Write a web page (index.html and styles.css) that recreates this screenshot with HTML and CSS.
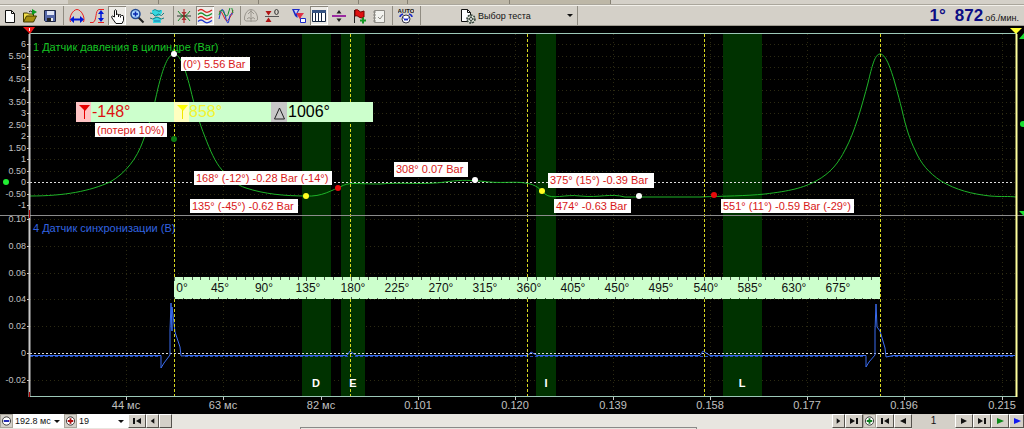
FILE: index.html
```html
<!DOCTYPE html>
<html lang="ru">
<head>
<meta charset="utf-8">
<title>Осциллограф</title>
<link rel="stylesheet" href="styles.css">
</head>
<body>
<div class="tabs"><span class="tab w1"></span><span class="tab w2"></span><span class="tab w2"></span><span class="tab w3"></span><span class="tab w4"></span><span class="tab w4"></span></div>
<header class="toolbar">
  <div class="group file">
    <button class="tool" aria-label="Новый"><svg viewBox="0 0 16 16"><path d="M3.500 2.500h6l3 3v9h-9z" fill="#fff" stroke="#111"/><path d="M9.500 2.500v3h3" fill="none" stroke="#111"/></svg></button>
    <button class="tool" aria-label="Открыть"><svg viewBox="0 0 16 16"><path d="M1.500 14V5h4l1 1h5v3" fill="#f4e04c" stroke="#443c00"/><path d="M1.500 14l3-6h10l-3 6z" fill="#a89010" stroke="#443c00"/><path d="M10 1l5 3-5 3z" fill="#0a9a20"/><path d="M7 4q1-2 3 0" fill="none" stroke="#222"/></svg></button>
    <button class="tool" aria-label="Сохранить"><svg viewBox="0 0 16 16"><path d="M2.500 2.500h11v11h-10l-1-1z" fill="#5668a8" stroke="#1c2340"/><path d="M5 3h7v4H5z" fill="#dfe4f4"/><path d="M5 10h6v3H5z" fill="#222"/><path d="M9 10h2v3H9z" fill="#eee"/></svg></button>
  </div>
  <div class="group view">
    <button class="tool" aria-label="Период"><svg viewBox="0 0 16 16"><path d="M1.500 14C-.5 9 4 1.500 8 1.500S16.500 9 14.500 14" fill="none" stroke="#e82020"/><path d="M4 11.500h8" stroke="#0018d8" stroke-width="2"/><path d="M5 8v7L1 11.500zM11 8v7l4-3.500z" fill="#0018d8"/></svg></button>
    <button class="tool" aria-label="Амплитуда"><svg viewBox="0 0 16 16"><path d="M1 14.500h3C8 13 6 2 10 1.500h5" fill="none" stroke="#e82020"/><path d="M9 14.500h6" stroke="#e82020"/><path d="M12 4v8" stroke="#0018d8" stroke-width="1.500"/><path d="M9 6l3-4 3 4zM9 10l3 4 3-4z" fill="#0018d8"/></svg></button>
    <button class="tool on" aria-label="Рука"><svg viewBox="0 0 16 16"><path d="M5.500 9V2.500q1-1.500 2 0V7l1-1 1.500 1 1.500-.5 1 1 1.500 0 .5 1v4l-1.500 3h-6L3 10q-1-2 .5-2z" fill="#fff" stroke="#111"/><path d="M9.500 7v2M11.500 7.500v2" stroke="#111"/></svg></button>
    <button class="tool" aria-label="Масштаб"><svg viewBox="0 0 16 16"><path d="M9.500 9.500l5 5" stroke="#222" stroke-width="2"/><circle cx="6.500" cy="6" r="4.500" fill="#a8d4ff" stroke="#234a92" stroke-width="1.500"/><path d="M4 6h5M6.500 3.500v5" stroke="#0828b0" stroke-width="1.500"/></svg></button>
    <button class="tool" aria-label="Осциллограмма"><svg viewBox="0 0 16 16"><path d="M3 2h10v3l-3 3H6L3 5zM6 9h4l2 2v4H4v-4z" fill="#35d8e0"/><path d="M1 5q3 0 4 2t3 0 3 0 4-2M1 10q3 2 5 0t4 0 5 0" fill="none" stroke="#177c82"/><path d="M4 2.500q2-2 4 0t4 0" fill="none" stroke="#258a96"/><path d="M5 13h6" stroke="#1a6fb0"/></svg></button>
  </div>
  <div class="group mode">
    <button class="tool" aria-label="Ноль"><svg viewBox="0 0 16 16"><path d="M2 3q3 5 6 5t6 5M2 13q3-5 6-5t6-5" fill="none" stroke="#19882c"/><path d="M1 8h14" stroke="#333"/><path d="M8 1v14" stroke="#a11"/><path d="M5.500 4h5L8 7.500zM5.500 12h5L8 8.500z" fill="#a33"/></svg></button>
    <button class="tool on" aria-label="Раздельно"><svg viewBox="0 0 16 16"><g fill="none" stroke-width="1.200"><path d="M1 3q3-3 6 0t8-1" stroke="#d82020"/><path d="M1 6.500q3-3 6 0t8-1" stroke="#149030"/><path d="M1 10q3-3 6 0t8-1" stroke="#d82020"/><path d="M1 13.500q3-3 6 0t8-1" stroke="#2038d0"/></g></svg></button>
    <button class="tool" aria-label="Вместе"><svg viewBox="0 0 16 16"><g fill="none"><path d="M1 3q3 0 5 6t5 2 4-9" stroke="#d82020"/><path d="M1 11Q4-6 7 7t4 5 4-6" stroke="#2038d0"/><path d="M1 7q2-9 5-2t5-2 4 2" stroke="#149030"/></g></svg></button>
  </div>
  <div class="group level">
    <button class="tool" aria-label="Авто"><svg viewBox="0 0 16 16"><path d="M3 13Q1 13 1.500 9 3 2 8 1.500q5 .5 6.500 7.500.5 4-1.500 4z" fill="none" stroke="#9a968e"/><path d="M8 2v12M4 11q2-3 4 0 2-3 4 0M5 6l3-3 3 3" fill="none" stroke="#9a968e"/></svg></button>
    <button class="tool" aria-label="Обнуление"><svg viewBox="0 0 16 16"><path d="M1 8.500h14" stroke="#555"/><path d="M1.500 3h6l-3 4.500zM1.500 14h6l-3-4.500z" fill="#b01414"/><ellipse cx="12.500" cy="4" rx="1.800" ry="2.500" fill="none" stroke="#333"/></svg></button>
  </div>
  <div class="group data">
    <button class="tool" aria-label="Фильтр"><svg viewBox="0 0 16 16"><path d="M1 1h8L6.500 5v5L4 8z" fill="#1a28c8"/><path d="M3 2l2 4 2-4z" fill="#c8d0f4"/><path d="M5 5h8l-3 4v4L7.500 9z" fill="#e03048"/><path d="M9.500 10.500h5v4h-5z" fill="#fff" stroke="#1a28c8"/></svg></button>
    <button class="tool on" aria-label="Таблица"><svg viewBox="0 0 16 16"><path d="M1.500 2.500h13v11h-13z" fill="#fff" stroke="#15253f"/><path d="M1 2h14v3H1z" fill="#34517f"/><path d="M4.500 5v9M7.500 5v9M10.500 5v9" stroke="#15253f"/></svg></button>
    <button class="tool" aria-label="Разделить"><svg viewBox="0 0 16 16"><path d="M1 8h14" stroke="#9a2aa0" stroke-width="2"/><path d="M5.500 5.500h5L8 2zM5.500 10.500h5L8 14z" fill="#222"/></svg></button>
    <button class="tool" aria-label="Метка"><svg viewBox="0 0 16 16"><path d="M3.500 2v13" stroke="#222"/><path d="M4 2q3-1 4 1t5 0v6q-3 2-5 0T4 8z" fill="#e01010" stroke="#700"/><path d="M9 12.500h6M12 9.500v6" stroke="#119922" stroke-width="2"/></svg></button>
    <button class="tool" aria-label="Отчёт"><svg viewBox="0 0 16 16"><path d="M3.500 2.500h10v12h-10z" fill="#f2f2ee" stroke="#8c8a84"/><path d="M2 4h3M2 7h3M2 10h3M2 13h3M7 9l2 2 3-4" fill="none" stroke="#8c8a84"/></svg></button>
  </div>
  <div class="group run">
    <button class="tool" aria-label="Автозапуск"><svg viewBox="0 0 16 16"><text x="8" y="5" class="auto">AUTO</text><circle cx="8" cy="11" r="4" fill="#fff" stroke="#334"/><path d="M5.500 9.500l1.500 3 1-2 1 2 1.500-3" fill="none" stroke="#1a28c8"/><path d="M2 9q0-2 3-3M14 9q0-2-3-3" fill="none" stroke="#1a28c8" stroke-width="1.500"/></svg></button>
  </div>
  <button class="test"><svg class="testicon" viewBox="0 0 16 16"><path d="M1.500 1.500h6l3 3v9h-9z" fill="#fff" stroke="#111"/><path d="M7.500 1.500v3h3" fill="none" stroke="#111"/><circle cx="11" cy="11" r="4" fill="#e4e8dc" stroke="#34423a" stroke-width="1.500" stroke-dasharray="2 1"/><path d="M7 11h8M11 7v8" stroke="#34423a"/><circle cx="11" cy="11" r="1.500" fill="#fff" stroke="#34423a"/></svg><span>Выбор теста</span><i class="caret"></i></button>
  <output class="rpm"><b>1°</b><b>872</b><small>об./мин.</small></output>
</header>
<main class="scope">
  <svg class="plot" id="plot" viewBox="0 26 1024 388" role="img" aria-label="Осциллограмма">
    <g id="grid"></g>
    <g class="phase"><path d="M302 34h29v362h-29zM341 34h24v362h-24zM536 34h20v362h-20zM723 34h39v362h-39z"/></g>
    <path class="zero" d="M30 182.500H1014M30 353.500H1014"/>
    <text class="channel green" x="33" y="51">1 Датчик давления в цилиндре (Bar)</text>
    <text class="channel blue" x="33" y="232">4 Датчик синхронизации (В)</text>
    <path class="wave pressure" d="M30 196C65 196 90 191 110 182C126 173 137 158 143 141C150 123 154 106 158 88C163 68 168 54 174 54C180 54 185 68 190 87C195 108 199 122 205 137C210 150 215 162 222 170C230 178 236 185 246 188C264 194 285 196 306 196C322 197 332 190 342 186C350 182 356 184 380 184C400 182 425 185 445 182C460 180 465 180 480 181C500 184 515 181 525 183C536 184 541 190 545 194C552 200 565 194 580 196C600 198 610 193 625 197L700 197C725 196 745 196 765 194C790 191 803 188 816 181C831 173 839 162 845 150C855 132 862 105 868 83C872 66 875 54 880 54C887 54 893 74 902 110C906 128 910 140 915 150C921 164 929 173 941 181C956 190 972 194 990 196C1002 197 1008 196 1016 197"/>
    <path class="wave sync" d="M30 355.500H161V368L164 363 170 355V330L171 303 172 331 172 307 175 332 180 347 181 356 187 355.500H347L350 351 356 355.500H528L531 352 537 355.500H700L703 351 710 355.500H866V367L869 362 875 355V330L876 304 877 327 880 331 885 348 886 357 893 355.500H1015"/>
    <path class="noise" d="M30 356.500H160M185 356.500H865M890 356.500H1015"/>
    <path class="mark" d="M174.500 34V396M350.500 34V396M527.500 34V396M704.500 34V396M880.500 34V396"/>
    <g class="phasename"><text x="316" y="387">D</text><text x="353" y="387">E</text><text x="546" y="387">I</text><text x="742" y="387">L</text></g>
    <path class="frame" d="M29 33.500H1017M29 396.500H1017"/>
    <path class="split" d="M0 215.500H1024"/>
    <path d="M29.500 34V397" stroke="#c8c8c8" stroke-width="2"/>
    <path d="M1016.500 34V397" stroke="#ffff9c" stroke-width="2"/>
    <path d="M29.500 210V218M29.500 392V397" stroke="#b00000" stroke-width="1"/>
    <path d="M23 27h12l-5 7z" fill="#f01818"/><path d="M29.500 28v3" stroke="#fff"/>
    <path d="M1010 28h12l-6 6z" fill="#ffff30"/>
    <path d="M1019 39l5-6v6zM1019 211h5v5z" fill="#18e030"/>
    <circle cx="1023" cy="124" r="3" fill="#18e030"/>
    <circle cx="6" cy="182" r="3" fill="#22ee33"/>
    <g id="ruler"></g>
    <rect x="76" y="102" width="297" height="20" fill="#ccffcc"/>
    <rect x="76" y="102" width="15" height="20" fill="#ffc4c4"/><rect x="174" y="102" width="15" height="20" fill="#ffffc0"/><rect x="271" y="102" width="16" height="20" fill="#c8c8c8"/>
    <path d="M79 105h11l-5 6z" fill="#e80000"/><path d="M84.500 110v9" stroke="#e80000"/>
    <path d="M177 105h11l-5 6z" fill="#ffff00"/><path d="M182.500 110v9" stroke="#f0e800"/>
    <path d="M279.500 108l5 11h-10z" fill="none" stroke="#222"/>
    <g class="delta"><text x="92" y="117" fill="#dd1111">-148°</text><text x="189" y="117" fill="#f4f430">858°</text><text x="288" y="117" fill="#000">1006°</text></g>
    <g id="notes"></g>
  </svg>
</main>
<footer class="status">
  <button class="key round" aria-label="Уменьшить"><svg viewBox="0 0 12 12"><circle cx="6" cy="6" r="4.500" fill="#fff" stroke="#333"/><path d="M3 6h6" stroke="#1018b0" stroke-width="2"/></svg></button>
  <div class="combo"><select aria-label="Развёртка"><option>192.8 мс</option></select><i class="caret"></i></div>
  <button class="key round" aria-label="Увеличить"><svg viewBox="0 0 12 12"><circle cx="6" cy="6" r="4.500" fill="#fff" stroke="#333"/><path d="M3 6h6M6 3v6" stroke="#b01010" stroke-width="2"/></svg></button>
  <div class="combo"><select aria-label="Шаг"><option>19</option></select><i class="caret"></i></div>
  <button class="key" aria-label="В начало"><svg viewBox="0 0 12 12"><path d="M2 3h2v6H2zM10 3v6L5 6z"/></svg></button>
  <button class="key narrow" aria-label="Влево"><svg viewBox="0 0 12 12"><path d="M8 3v6L4 6z"/></svg></button>
  <div class="track"><button class="key narrow" aria-label="Прокрутка"></button><span class="under"></span></div>
  <button class="key narrow" aria-label="Вправо"><svg viewBox="0 0 12 12"><path d="M4 3v6l4-3z"/></svg></button>
  <button class="key" aria-label="В конец"><svg viewBox="0 0 12 12"><path d="M8 3h2v6H8zM2 3v6l5-3z"/></svg></button>
  <button class="key round" aria-label="Добавить кадр"><svg viewBox="0 0 12 12"><circle cx="6" cy="6" r="4.500" fill="#fff" stroke="#333"/><path d="M3 6h6M6 3v6" stroke="#108020" stroke-width="2"/></svg></button>
  <button class="key" aria-label="Первый кадр"><svg viewBox="0 0 12 12"><path d="M2 3h2v6H2zM10 3v6L5 6z"/></svg></button>
  <button class="key" aria-label="Предыдущий кадр"><svg viewBox="0 0 12 12"><path d="M9 3v6L3 6z"/></svg></button>
  <span class="page">1</span>
  <button class="key" aria-label="Следующий кадр"><svg viewBox="0 0 12 12"><path d="M3 3v6l6-3z"/></svg></button>
  <button class="key" aria-label="Последний кадр"><svg viewBox="0 0 12 12"><path d="M8 3h2v6H8zM2 3v6l5-3z"/></svg></button>
  <button class="key go" aria-label="Пуск"><svg viewBox="0 0 12 12"><path d="M3 3v6l7-3z"/></svg></button>
  <button class="key play" aria-label="Воспроизвести"><svg viewBox="0 0 12 12"><path d="M3 3v6l7-3z"/></svg></button>
</footer>
<script src="plot.js"></script>
</body>
</html>
```
FILE: styles.css
```css
* { box-sizing: border-box; }
body {
  margin: 0;
  min-height: 100vh;
  display: flex;
  flex-direction: column;
  background: #d4d0c8;
  font-family: "Liberation Sans", Arial, sans-serif;
  overflow: hidden;
}
button { margin: 0; padding: 0; border: 0; background: none; font: inherit; color: inherit; }
svg { display: block; }

.tabs { display: flex; height: 5px; padding-left: 68px; border-bottom: 1px solid #aaa69c; }
.tab { background: #bdb7a7; border-right: 1px solid #858073; }
.w1 { width: 91px; }
.w2 { width: 100px; }
.w3 { width: 49px; }
.w4 { width: 102px; }
.w4:last-child { width: 101px; }

.toolbar { display: flex; align-items: center; height: 21px; border-bottom: 1px solid #a09c92; border-top: 1px solid #f2f0ea; }
.group { display: flex; gap: 2px; border-right: 1px solid #908c82; margin-right: 1px; }
.file { padding: 0 4px 0 1px; }
.view { padding: 0 7px 0 3px; }
.mode { gap: 3px; padding-right: 5px; }
.level { gap: 3px; padding-right: 8px; border: 0; }
.data { padding-right: 4px; }
.run { padding: 0 5px 0 3px; }
.tool { width: 18px; height: 19px; display: flex; align-items: center; justify-content: center; }
.tool svg { width: 16px; height: 16px; }
.tool.on { background: #edebe6; box-shadow: inset 1px 1px #8a867c, inset -1px -1px #fff; }
.auto { font-size: 6px; font-weight: bold; text-anchor: middle; fill: #111; }
.test { display: flex; align-items: center; gap: 2px; height: 19px; width: 118px; margin-left: 38px; padding-right: 4px; border-right: 1px solid #908c82; font-size: 9px; color: #111; white-space: nowrap; }
.testicon { width: 16px; height: 16px; }
.caret { margin-left: auto; border: 3px solid transparent; border-top-color: #111; border-bottom: 0; }
.rpm { margin-left: auto; padding-right: 5px; display: flex; align-items: baseline; color: #0c0c84; font-size: 17px; gap: 9px; }
.rpm small { font-size: 9px; color: #111; margin-left: -7px; }

.scope { flex: 1; background: #000; }
.plot { width: 100%; height: auto; }
.gridline { stroke: #2c2a12; stroke-dasharray: 1 3; }
.phase { fill: #003200; }
.zero { stroke: #dcdcdc; stroke-dasharray: 2 2; }
.channel { font-size: 11px; }
.green { fill: #16c424; }
.blue { fill: #3264e0; }
.wave { fill: none; stroke-width: 1; }
.pressure { stroke: #1eb428; }
.sync { stroke: #3a6cf0; }
.noise { stroke: #2450b8; stroke-dasharray: 3 2; }
.mark { stroke: #d8d820; stroke-dasharray: 3 2; }
.phasename { font-size: 11px; font-weight: bold; fill: #fff; text-anchor: middle; }
.frame { stroke: #9cc8b8; }
.split { stroke: #8c8c8c; }
.axis { font-size: 9px; fill: #c0c0c0; text-anchor: end; }
.time { font-size: 11px; fill: #c0c0c0; text-anchor: middle; }
.tick { stroke: #c8c8c8; }
.degree { font-size: 12px; fill: #111; text-anchor: middle; }
.delta { font-size: 16px; }
.note { font-size: 11px; fill: #d81818; }

.status { display: flex; height: 15px; background: #e8e6e0; font-size: 10px; color: #111; }
.key { width: 18px; height: 14px; flex: none; display: flex; align-items: center; justify-content: center; background: #d4d0c8; border: 1px solid; border-color: #fff #55524c #55524c #fff; fill: #111; }
.key svg { width: 12px; height: 12px; }
.narrow { width: 13px; }
.round { width: 13px; border-color: #aaa69c; }
.go { fill: #0c8a18; }
.play { width: 15px; fill: #1018f0; }
.combo { width: 51px; height: 14px; display: flex; align-items: center; background: #fff; padding-right: 4px; }
.combo select { appearance: none; border: 0; background: none; padding: 0 0 0 2px; font: inherit; font-size: 9px; color: inherit; width: 40px; height: 14px; }
.track { flex: 1; display: flex; align-items: flex-end; }
.track .narrow { align-self: flex-start; }
.under { width: 59%; height: 2px; margin-left: auto; margin-right: 20%; border: 1px solid #8a8a88; border-bottom: 0; }
.page { width: 43px; text-align: center; background: #d4d0c8; line-height: 14px; }
```
FILE: plot.js
```js
const NS = "http://www.w3.org/2000/svg";
function add(parent, name, attrs, text) {
  const el = document.createElementNS(NS, name);
  for (const key in attrs) el.setAttribute(key, attrs[key]);
  if (text) el.textContent = text;
  parent.appendChild(el);
}

const grid = document.getElementById("grid");
const bar = ["6", "5.50", "5", "4.50", "4", "3.50", "3", "2.50", "2", "1.50", "1", "0.50", "0", "-0.50", "-1"];
const volt = ["0.10", "0.08", "0.06", "0.04", "0.02", "0", "-0.02"];
function level(y, label) {
  add(grid, "path", { class: "gridline", d: `M30 ${y + 0.5}H1015` });
  add(grid, "path", { class: "tick", d: `M27 ${y + 0.5}H30` });
  add(grid, "text", { class: "axis", x: 26, y: y + 3 }, label);
}
bar.forEach((label, i) => level(Math.round(44 + i * 11.5), label));
volt.forEach((label, i) => level(Math.round(219 + i * 26.75), label));

["44 мс", "63 мс", "82 мс", "0.101", "0.120", "0.139", "0.158", "0.177", "0.196", "0.215"].forEach((label, i) => {
  const x = Math.round(126 + i * 97.3);
  add(grid, "path", { class: "gridline", d: `M${x + 0.5} 34V396` });
  add(grid, "path", { class: "tick", d: `M${x + 0.5} 397V400` });
  add(grid, "text", { class: "time", x, y: 409 }, label);
});

const ruler = document.getElementById("ruler");
const start = 174, end = 880;
add(ruler, "rect", { x: start, y: 277, width: end - start, height: 22, fill: "#ccffcc" });
for (let a = 0; a < 720; a += 9) {
  const x = Math.round(start + (a / 720) * (end - start));
  const len = a % 45 ? 3 : 4;
  add(ruler, "path", { d: `M${x + 0.5} 277v${len}M${x + 0.5} 299v-${len - 2}`, stroke: "#4a5a4a" });
  if (a % 45 === 0) add(ruler, "text", { class: "degree", x: a ? x + 2 : x + 8, y: 292 }, a + "°");
}

const notes = document.getElementById("notes");
[
  [181, 57, 69, 14, "(0°) 5.56 Bar"],
  [95, 123, 72, 14, "(потери 10%)"],
  [194, 171, 138, 14, "168° (-12°) -0.28 Bar (-14°)"],
  [190, 199, 108, 14, "135° (-45°) -0.62 Bar"],
  [394, 162, 74, 15, "308° 0.07 Bar"],
  [548, 173, 106, 15, "375° (15°) -0.39 Bar"],
  [554, 199, 77, 14, "474° -0.63 Bar"],
  [721, 199, 133, 14, "551° (11°) -0.59 Bar (-29°)"]
].forEach(([x, y, width, height, text]) => {
  add(notes, "rect", { x, y, width, height, fill: "#fff" });
  add(notes, "text", { class: "note", x: x + 2, y: y + 11 }, text);
});
[
  [174, 54, "#fff"], [174, 139, "#0a7a14"], [306, 196, "#ffff20"], [338, 188, "#e80c0c"],
  [475, 180, "#fff"], [542, 191, "#ffff20"], [639, 196, "#fff"], [714, 195, "#e80c0c"]
].forEach(([cx, cy, fill]) => add(notes, "circle", { cx, cy, r: 3, fill }));
```
